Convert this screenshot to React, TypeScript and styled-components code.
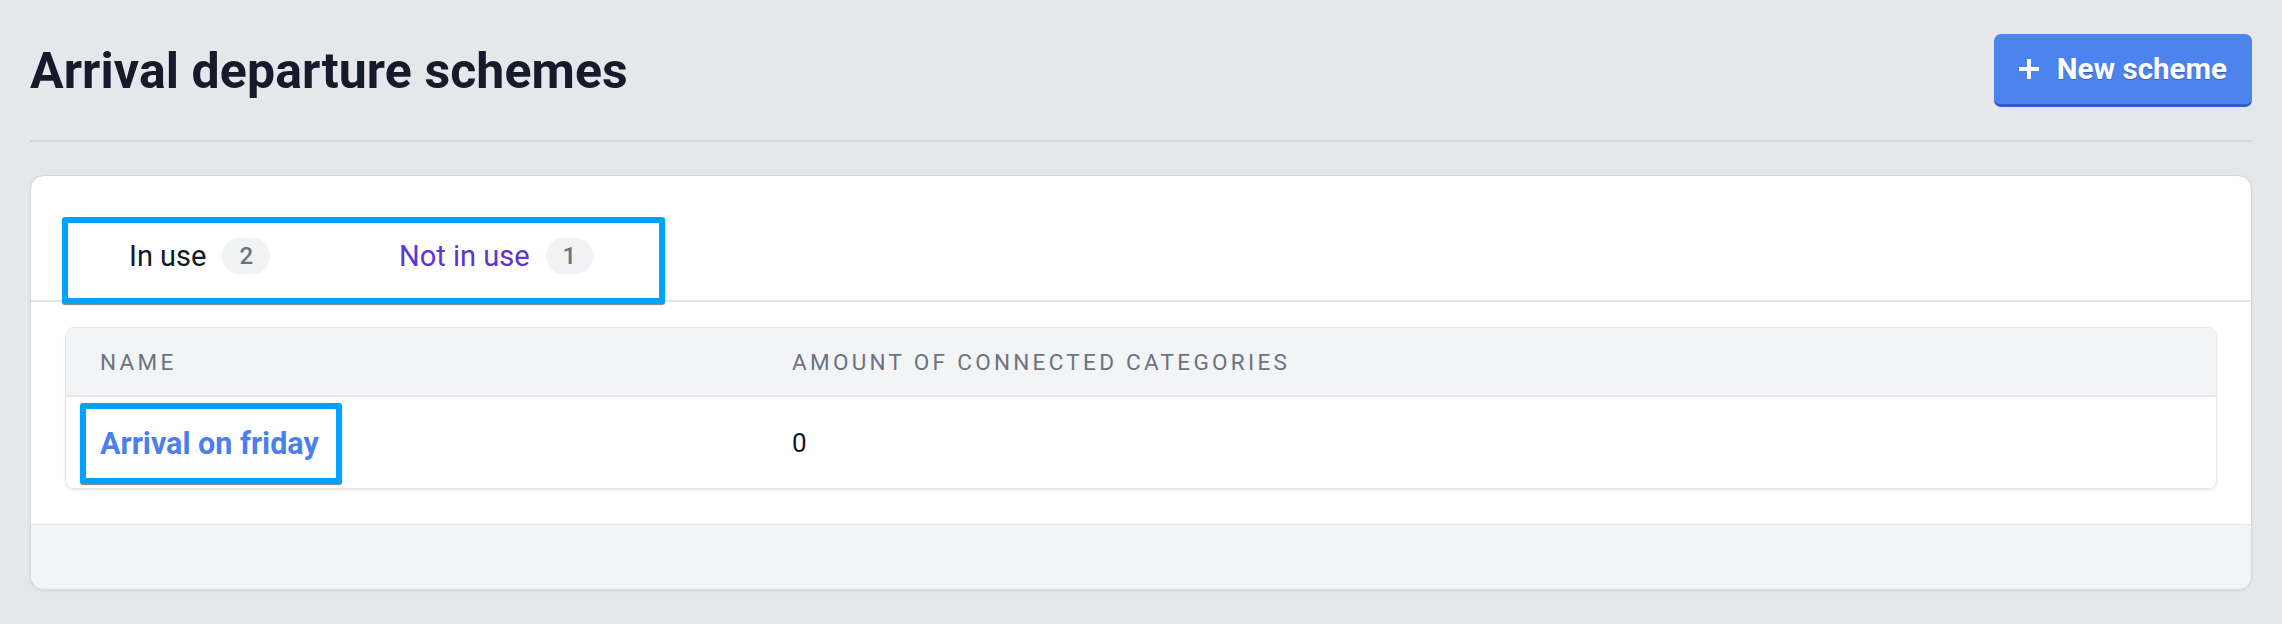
import React from "react";
import styled, { createGlobalStyle } from "styled-components";

const GlobalStyle = createGlobalStyle`
  *, *::before, *::after { box-sizing: border-box; }
  html, body { margin: 0; padding: 0; }
  body {
    background: #e5e7eb;
    font-family: Roboto, "Liberation Sans", Arial, sans-serif;
    color: #111827;
  }
`;

const Page = styled.div`
  padding: 34px 30px 30px 30px;
`;

const Header = styled.header`
  display: flex;
  align-items: center;
  justify-content: space-between;
  padding-bottom: 33px;
  border-bottom: 2px solid #d4d6db;
`;

const Title = styled.h1`
  margin: 0;
  font-size: 50px;
  line-height: 1;
  font-weight: 700;
  color: #161b2b;
  letter-spacing: 0.1px;
`;

const PrimaryButton = styled.button`
  display: flex;
  align-items: center;
  gap: 17px;
  height: 73px;
  padding: 0 25px 0 24px;
  border: none;
  border-bottom: 3px solid #2d5cc4;
  border-radius: 7px;
  background: #4d83ef;
  color: #ffffff;
  font-family: inherit;
  font-size: 29.5px;
  font-weight: 700;
  text-shadow: 0 1px 1px rgba(0, 0, 0, 0.25);
  cursor: pointer;
`;

const Card = styled.section`
  margin-top: 33px;
  background: #ffffff;
  border: 1px solid #d6d8dd;
  border-radius: 14px;
  box-shadow: 0 1px 3px rgba(0, 0, 0, 0.08);
  overflow: hidden;
`;

const TabBar = styled.div`
  display: flex;
  align-items: flex-start;
  height: 126px;
  padding-left: 31px;
  border-bottom: 2px solid #e3e5e9;
`;

const Highlight = styled.div`
  position: relative;
  z-index: 1;
  border: 6px solid #00a2ff;
  border-radius: 3px;
  box-shadow: 0 1px 1px rgba(0, 0, 0, 0.5);
  background: #ffffff;
`;

const TabList = styled(Highlight)`
  display: flex;
  align-items: flex-start;
  gap: 129px;
  height: 87px;
  margin-top: 41px;
  padding: 15px 66px 0 61px;
`;

const Tab = styled.div<{ $active?: boolean }>`
  display: flex;
  align-items: center;
  gap: 16px;
  height: 36px;
  font-size: 29px;
  color: ${p => (p.$active ? "#111827" : "#5b34d6")};
  white-space: nowrap;
  cursor: pointer;
`;

const Count = styled.span`
  display: inline-flex;
  align-items: center;
  justify-content: center;
  height: 36px;
  padding: 0 17px;
  border-radius: 999px;
  background: #f1f2f4;
  color: #6b7280;
  font-size: 24px;
  font-weight: 500;
`;

const Body = styled.div`
  padding: 25px 34px 35px 34px;
`;

const Table = styled.div`
  border: 1px solid #e5e7eb;
  border-radius: 9px;
  box-shadow: 0 2px 3px rgba(0, 0, 0, 0.07);
  overflow: hidden;
`;

const GridRow = styled.div<{ $head?: boolean }>`
  display: grid;
  grid-template-columns: 692px 1fr;
  align-items: center;
  height: ${p => (p.$head ? "69px" : "91px")};
  background: ${p => (p.$head ? "#f3f4f6" : "#ffffff")};
  border-bottom: ${p => (p.$head ? "2px solid #e5e7eb" : "none")};
`;

const HeadCell = styled.div`
  padding: 0 34px;
  font-size: 22.5px;
  letter-spacing: 3.3px;
  text-transform: uppercase;
  color: #6b7280;
  white-space: nowrap;
`;

const Cell = styled.div<{ $pad?: number }>`
  padding: 0 ${p => p.$pad ?? 34}px;
  font-size: 26px;
  color: #111827;
`;

const LinkBox = styled(Highlight)`
  display: inline-flex;
  align-items: center;
  height: 81px;
  padding: 0 17px 0 14px;
  margin-top: 2px;
`;

const SchemeLink = styled.a`
  font-size: 30.5px;
  font-weight: 700;
  color: #4b7fee;
  text-decoration: none;
  white-space: nowrap;
  cursor: pointer;
`;

const Footer = styled.div`
  height: 65px;
  background: #f3f4f6;
  border-top: 1px solid #e5e7eb;
`;

const PlusIcon = () => (
  <svg width="22" height="22" viewBox="0 0 22 22" aria-hidden="true">
    <path d="M11 1v20M1 11h20" stroke="#ffffff" strokeWidth="4" fill="none" />
  </svg>
);

export default function App() {
  return (
    <>
      <GlobalStyle />
      <Page>
        <Header>
          <Title>Arrival departure schemes</Title>
          <PrimaryButton>
            <PlusIcon />
            New scheme
          </PrimaryButton>
        </Header>
        <Card>
          <TabBar>
            <TabList>
              <Tab $active>
                In use <Count>2</Count>
              </Tab>
              <Tab>
                Not in use <Count>1</Count>
              </Tab>
            </TabList>
          </TabBar>
          <Body>
            <Table>
              <GridRow $head>
                <HeadCell>Name</HeadCell>
                <HeadCell>Amount of connected categories</HeadCell>
              </GridRow>
              <GridRow>
                <Cell $pad={14}>
                  <LinkBox>
                    <SchemeLink>Arrival on friday</SchemeLink>
                  </LinkBox>
                </Cell>
                <Cell>0</Cell>
              </GridRow>
            </Table>
          </Body>
          <Footer />
        </Card>
      </Page>
    </>
  );
}
